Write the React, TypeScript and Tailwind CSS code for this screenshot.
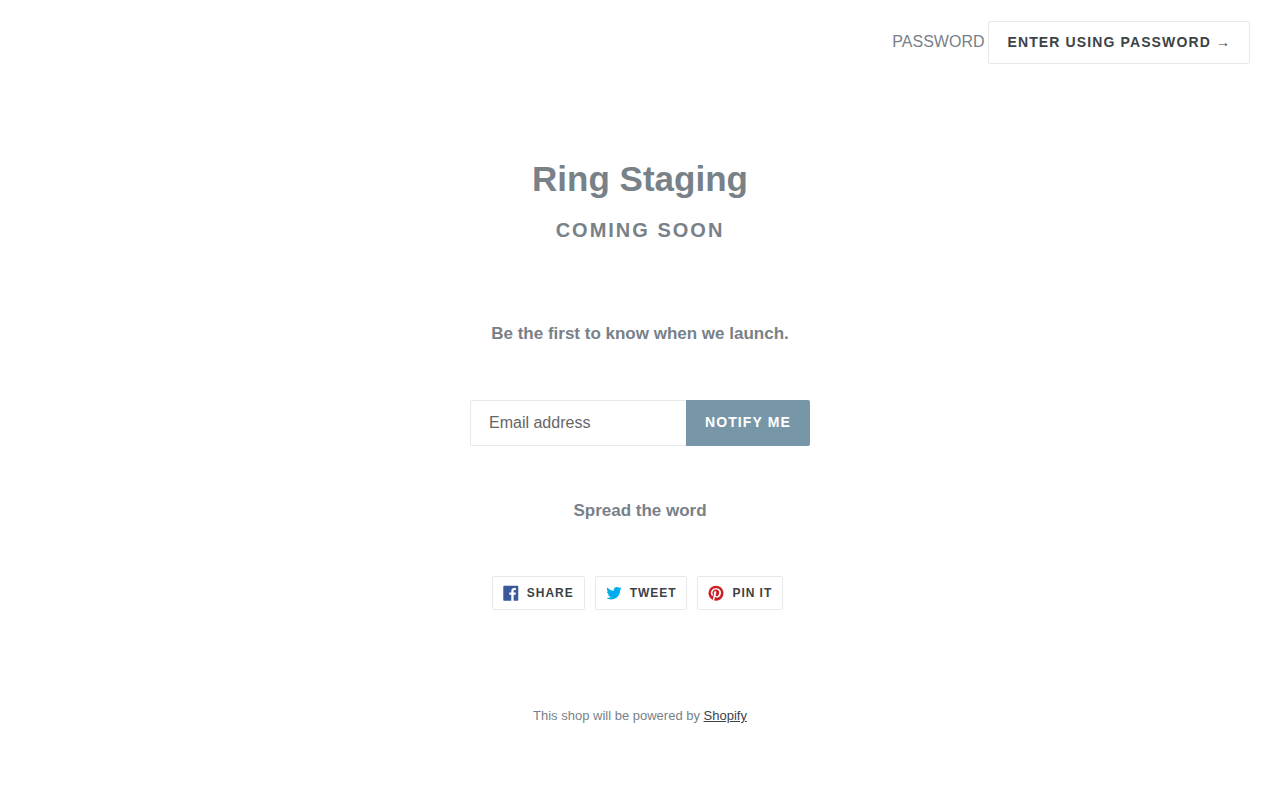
import type { ReactNode } from "react";

const shareLinks: { label: string; href: string; color: string; path: string }[] = [
  {
    label: "Share",
    href: "#facebook",
    color: "#3b5998",
    path: "M18.05.811q.439 0 .744.305t.305.744v16.637q0 .439-.305.744t-.744.305h-4.732v-7.221h2.415l.342-2.854h-2.757v-1.83q0-.659.293-1t1.073-.342h1.488V3.762q-.976-.098-2.171-.098-1.634 0-2.635.964t-1 2.72V9.47H7.951v2.854h2.415v7.221H1.413q-.439 0-.744-.305t-.305-.744V1.859q0-.439.305-.744T1.413.81H18.05z",
  },
  {
    label: "Tweet",
    href: "#twitter",
    color: "#00aced",
    path: "M19.551 4.208q-.815 1.202-1.956 2.038 0 .082.02.255t.02.255q0 1.589-.469 3.179t-1.426 3.036-2.272 2.567-3.158 1.793-3.963.672q-3.301 0-6.031-1.773.571.041.937.041 2.751 0 4.911-1.671-1.284-.02-2.292-.784T2.456 11.85q.346.082.754.082.55 0 1.039-.163-1.365-.285-2.262-1.365T1.09 7.918v-.041q.774.408 1.773.448-.795-.53-1.263-1.396t-.469-1.864q0-1.019.509-1.997 1.487 1.854 3.596 2.924T9.81 7.184q-.143-.509-.143-.897 0-1.63 1.161-2.781t2.832-1.151q.815 0 1.569.326t1.284.917q1.345-.265 2.506-.958-.428 1.386-1.732 2.18 1.243-.163 2.262-.611z",
  },
  {
    label: "Pin it",
    href: "#pinterest",
    color: "#cb2027",
    path: "M9.958.811q1.903 0 3.635.744t2.988 2 2 2.988.744 3.635q0 2.537-1.256 4.696t-3.415 3.415-4.696 1.256q-1.39 0-2.659-.366.707-1.147.951-2.025l.659-2.561q.244.463.903.817t1.39.354q1.464 0 2.622-.842t1.793-2.305.634-3.293q0-2.171-1.671-3.769t-4.257-1.598q-1.586 0-2.903.537T5.298 5.897 4.066 7.775t-.427 2.037q0 1.268.476 2.22t1.427 1.342q.171.073.293.012t.171-.232q.171-.61.195-.756.098-.268-.122-.512-.634-.707-.634-1.83 0-1.854 1.281-3.183t3.354-1.329q1.83 0 2.854 1t1.025 2.61q0 1.342-.366 2.476t-1.049 1.817-1.561.683q-.732 0-1.195-.537t-.293-1.269q.098-.342.256-.878t.268-.915.207-.817.098-.732q0-.61-.317-1t-.927-.39q-.756 0-1.269.695t-.512 1.744q0 .39.061.756t.134.537l.073.171q-1 4.342-1.22 5.098-.195.927-.146 2.171-2.513-1.122-4.062-3.44T.59 10.177q0-3.879 2.744-6.623T9.957.81z",
  },
];

function ShareLink({ href, children }: { href: string; children: ReactNode }) {
  return (
    <a
      href={href}
      className="flex h-[34px] items-center gap-2 rounded-xs border border-[#e8e9eb] bg-white px-[10px] text-xs font-bold tracking-[0.08em] text-[#3d4246] uppercase"
    >
      {children}
    </a>
  );
}

export default function App() {
  return (
    <div className="min-h-screen bg-white font-['Liberation_Sans',Arial,sans-serif] text-base text-[#788188]">
      <header className="flex items-baseline justify-end gap-1 px-[30px] pt-[21px]">
        <span className="uppercase">Password</span>
        <button
          type="button"
          className="rounded-xs border border-[#e8e9eb] bg-white px-[18px] pt-[10px] pb-[11px] text-sm font-bold tracking-[0.08em] text-[#3d4246] uppercase"
        >
          Enter using password <span className="font-normal">→</span>
        </button>
      </header>

      <main className="flex flex-col items-center px-6 pt-[90px] text-center">
        <h1 className="text-[35px] leading-[50px] font-bold">Ring Staging</h1>
        <h2 className="mt-3 text-xl leading-[28px] font-bold tracking-[0.1em] uppercase">Coming Soon</h2>
        <h3 className="mt-[78px] text-[17px] leading-6 font-bold">Be the first to know when we launch.</h3>

        <form className="mt-[54px] flex h-[46px] w-full max-w-[340px]" onSubmit={(e) => e.preventDefault()}>
          <input
            type="email"
            aria-label="Email address"
            placeholder="Email address"
            className="min-w-0 flex-1 rounded-l-xs border border-r-0 border-[#e8e9eb] bg-white px-[18px] text-base text-[#333333] placeholder:text-[#666666]"
          />
          <button
            type="submit"
            className="rounded-r-xs bg-[#7796a8] px-[19px] pb-[2px] text-sm font-bold tracking-[0.08em] whitespace-nowrap text-white uppercase"
          >
            Notify me
          </button>
        </form>

        <h3 className="mt-[53px] text-[17px] leading-6 font-bold">Spread the word</h3>
        <div className="mt-[53px] mr-[5px] flex gap-[10px]">
          {shareLinks.map((link) => (
            <ShareLink key={link.label} href={link.href}>
              <svg viewBox="0 0 20 20" className="size-4" fill={link.color} aria-hidden="true">
                <path d={link.path} />
              </svg>
              <span>{link.label}</span>
            </ShareLink>
          ))}
        </div>
      </main>

      <footer className="px-6 pt-[96px] pb-16 text-center text-[13px] leading-5">
        This shop will be powered by{" "}
        <a href="#shopify" className="text-[#3d4246] underline">
          Shopify
        </a>
      </footer>
    </div>
  );
}
